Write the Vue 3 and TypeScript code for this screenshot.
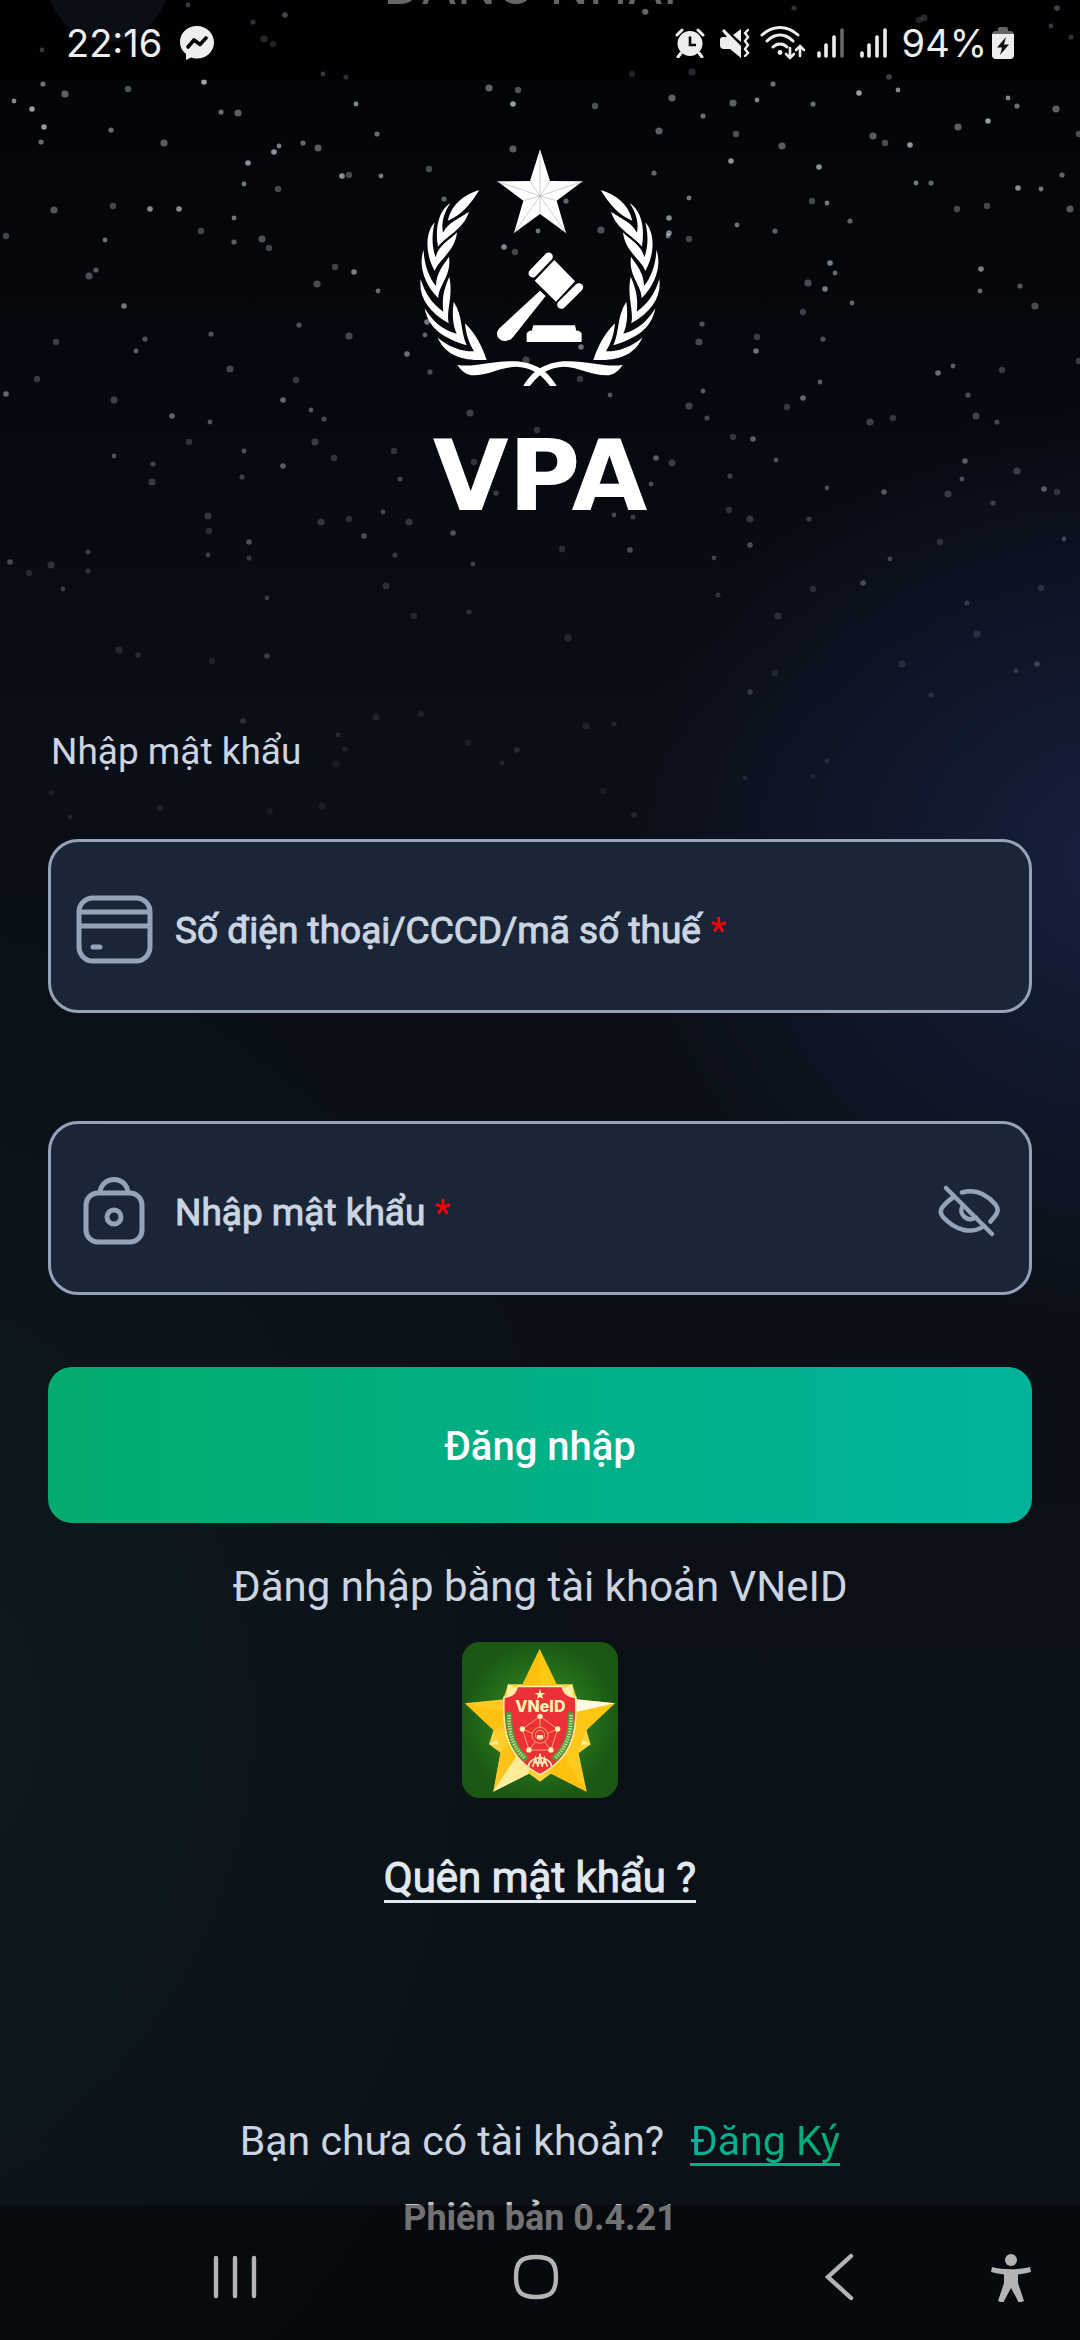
<script setup lang="ts">
import { ref } from 'vue'

interface Star {
  x: number
  y: number
  r: number
  o: number
}

const account = ref('')
const password = ref('')
const hidden = ref(true)

// Star field: x,y pairs on a 1080-wide sky that fades out towards the form.
const sky =
  '32,109 14,101 41,142 54,210 6,236 44,127 42,50 43,84 65,94 128,89 204,82 188,5 253,22 264,39 273,44 285,15 323,74 346,77 489,88 518,90 513,104 356,104 ' +
  '111,130 164,143 113,206 150,209 105,240 96,270 89,276 56,342 124,306 136,351 145,339 114,400 37,379 6,394 114,456 153,464 152,482 189,442 172,416 210,422 ' +
  '211,334 230,369 201,231 179,209 234,218 234,242 262,239 269,248 248,163 244,184 221,112 238,113 278,189 274,152 279,146 303,143 318,148 349,175 342,176 381,176 ' +
  '377,134 317,284 335,267 354,272 378,291 299,325 349,336 296,380 283,400 311,410 324,419 315,442 334,458 283,466 244,451 242,477 208,516 209,531 249,542 ' +
  '208,555 249,558 321,522 349,519 364,536 383,512 400,479 409,522 394,451 407,354 88,552 88,571 51,565 29,573 10,562 63,589 138,655 119,650 212,661 267,656 ' +
  '267,598 395,555 386,586 414,616 453,533 473,564 469,612 568,638 562,549 630,550 614,515 444,199 513,149 429,169 504,247 538,231 566,201 601,230 515,252 427,322 ' +
  '425,335 430,372 526,360 580,379 581,347 610,395 496,493 470,413 537,430 656,458 651,484 633,517 446,455 474,462 669,218 668,236 ' +
  '794,8 924,18 919,20 1057,8 1051,26 1071,37 692,72 632,74 889,77 898,90 773,84 672,98 595,106 859,93 757,100 703,116 733,103 736,134 731,161 689,198 654,173 ' +
  '659,131 689,239 669,233 737,225 775,231 782,146 812,201 819,167 827,203 813,104 873,136 885,143 910,145 916,183 931,183 958,127 957,209 988,121 1008,98 1017,106 ' +
  '1056,109 1079,134 1018,188 1041,189 1062,175 1070,209 987,206 981,269 980,291 1020,286 1035,306 1079,361 830,263 835,273 850,221 808,283 803,312 825,289 852,303 ' +
  '702,324 699,342 757,337 756,351 703,391 707,418 689,406 733,437 753,439 776,460 730,476 672,463 787,407 803,398 820,382 823,339 870,422 893,418 938,373 953,366 ' +
  '968,395 976,416 1002,370 965,461 962,479 997,422 1017,471 1057,492 1044,489 1064,539 993,503 948,494 940,542 884,492 827,488 809,519 750,519 729,510 750,545 ' +
  '714,558 718,595 778,616 813,589 863,583 890,559 967,603 977,634 1041,588 1037,664 1016,671 931,695 902,664 775,673 750,692 827,761 813,776 376,717 421,714 ' +
  '243,721 338,735 345,749 336,764 468,743 517,750 502,763 614,724 586,726 603,791 634,815 745,778 51,793 322,806 270,811 160,808 70,817'

const stars: Star[] = sky.split(' ').map((pair, i) => {
  const [x, y] = pair.split(',').map(Number)
  const bright = [1, 0.7, 0.5, 0.85, 0.6][(i * 3) % 5]
  return { x, y, r: [2.8, 3.6, 2.4, 3.2, 2.6][(i * 7) % 5], o: Math.max(0.12, 0.76 * (1 - y / 920)) * bright }
})

// Left half of the wreath; the right half is its mirror image.
const leaves = [
  'M238 180C190 195 155 222 143 272C185 255 212 222 238 180Z',
  'M151 220C118 240 104 290 114 350C135 320 190 300 207 245C180 265 145 275 129 308C124 280 130 250 151 220Z',
  'M104 277C75 310 75 370 104 423C115 390 165 365 171 307C150 330 115 345 107 382C95 350 95 315 104 277Z',
  'M71 360C55 400 70 460 115 505C115 465 155 440 147 380C130 405 108 430 108 468C85 440 72 400 71 360Z',
  'M62 447C55 500 85 545 146 580C138 540 160 500 148 440C135 470 124 500 130 545C95 520 75 490 62 447Z',
  'M74 535C85 595 130 625 200 646C180 600 190 560 161 515C156 550 158 585 170 611C125 600 95 570 74 535Z',
  'M113 623C140 680 190 692 260 690C245 645 225 610 195 580C198 615 208 640 222 664C185 665 145 650 113 623Z',
  'M172 704C215 715 280 690 350 694C420 700 450 735 470 768L450 768C430 740 400 712 350 710C300 712 270 735 220 736C200 735 185 725 172 704Z',
]
const halves = ['', 'translate(840 0) scale(-1 1)']
</script>

<template>
  <div class="page">
    <svg class="sky" viewBox="0 0 1080 860" aria-hidden="true">
      <circle v-for="(s, i) in stars" :key="i" :cx="s.x" :cy="s.y" :r="s.r" fill="#dfe6f2" :opacity="s.o" />
    </svg>

    <header class="top">
      <button class="round" type="button" aria-label="Quay lại">
        <svg viewBox="0 0 48 48" width="48" height="48"><path d="M30 8 14 24l16 16" fill="none" stroke="#fff" stroke-width="4" stroke-linecap="round" /></svg>
      </button>
      <h1>ĐĂNG NHẬP</h1>
    </header>

    <main class="content">
      <div class="brand">
        <svg class="emblem" viewBox="60 57 720 714" aria-hidden="true">
          <g fill="#fff">
            <g v-for="t in halves" :key="t" :transform="t">
              <path v-for="d in leaves" :key="d" :d="d" />
            </g>
            <path d="M420 58 450 153 548 154 470 212 498 309 420 252 342 309 370 212 292 154 390 153Z" />
            <path d="M463 390 525 454 468 515 404 452Z" />
            <path d="M420 482 437 498 340 620C326 638 300 637 292 618C289 606 293 600 300 593Z" />
            <path d="M400 586H525L529 602H537L545 610V636H380V610L388 602H395Z" />
          </g>
          <path d="M398 430 446 380M484 524 537 472" stroke="#fff" stroke-width="25" stroke-linecap="round" />
          <path d="M420 198V62M420 198 292 154M420 198 548 154M420 198 342 309M420 198 498 309M420 198V252M420 198 390 153M420 198 450 153M420 198 370 212M420 198 470 212" stroke="#b5b5b5" stroke-width="2" />
        </svg>
        <div class="name">VPA</div>
      </div>

      <form class="form" @submit.prevent>
        <p class="hint">Nhập mật khẩu</p>

        <div class="field">
          <svg class="icon" viewBox="0 0 78 78" aria-hidden="true">
            <g fill="none" stroke="#94a3b8" stroke-width="5">
              <rect x="4" y="8" width="71" height="63" rx="14" />
              <path d="M4 22H75M4 36H75" />
              <path d="M18 57H25" stroke-linecap="round" />
            </g>
          </svg>
          <label for="account">Số điện thoại/CCCD/mã số thuế <b>*</b></label>
          <input id="account" v-model="account" type="text" autocomplete="username" />
        </div>

        <div class="field">
          <svg class="icon" viewBox="0 0 78 78" aria-hidden="true">
            <g fill="none" stroke="#94a3b8" stroke-width="5">
              <rect x="11" y="21" width="56" height="49" rx="12" />
              <path d="M25 21C26 3 52 3 53 21" />
              <circle cx="39" cy="45" r="7" />
            </g>
          </svg>
          <label for="password">Nhập mật khẩu <b>*</b></label>
          <input id="password" v-model="password" :type="hidden ? 'password' : 'text'" autocomplete="current-password" />
          <button class="eye" type="button" aria-label="Hiện mật khẩu" @click="hidden = !hidden">
            <svg viewBox="54 72 68 58" width="68" height="58">
              <g fill="none" stroke="#94a3b8" stroke-width="4.5" stroke-linecap="round">
                <path d="M65 78 111 124" />
                <path d="M81 82.500C97 78 107 86 114 94C117.500 98 117.500 102 114 106L109.500 111.500" />
                <path d="M72 87.500C68 90 65 93 61.500 97C59 100 59 103 62 107C75 121 91 124.500 103 116" />
                <path d="M82 95.500C76 104 87 113 95 107.500" />
                <path d="M85.500 98.500C87 102 89 103.500 92 104.500" stroke-width="3" />
              </g>
            </svg>
          </button>
        </div>

        <button class="submit" type="submit">Đăng nhập</button>
      </form>

      <section class="alt">
        <p class="lead">Đăng nhập bằng tài khoản VNeID</p>
        <button class="vneid" type="button" aria-label="Đăng nhập bằng VNeID">
          <svg viewBox="66 66 468 468">
            <defs>
              <radialGradient id="leaf"><stop offset="0" stop-color="#37962a" /><stop offset="1" stop-color="#1b5814" /></radialGradient>
              <linearGradient id="gold" x1="0" y1="1" x2="1" y2="0"><stop offset="0" stop-color="#fff0a8" /><stop offset=".3" stop-color="#ffcb28" /><stop offset=".8" stop-color="#ffc60c" /><stop offset="1" stop-color="#fff3b8" /></linearGradient>
            </defs>
            <rect x="66" y="66" width="468" height="468" fill="url(#leaf)" />
            <path d="M204 193H397L452 373 300 485 147 373Z" fill="#ffd23c" />
            <path d="M204 193 238 210 200 240ZM397 193 362 210 400 240ZM452 373 400 345 400 375ZM147 373 200 345 200 375Z" fill="#fff0a0" />
            <path d="M299 87 350 192 399 237 525 250 440 330 415 395 440 515 335 462H265L160 515 182 395 160 330 75 250 200 237 248 192Z" fill="url(#gold)" />
            <path d="M299 87V300L248 192ZM75 250 300 300 160 330ZM160 515 300 300 182 395ZM440 515 300 300 335 462Z" fill="#ffbd08" opacity=".7" />
            <path d="M525 250 300 300 399 237Z" fill="#fffbe0" />
            <path d="M160 515 300 300 265 462Z" fill="#fff2b0" opacity=".8" />
            <path d="M232 199H367C370 220 385 230 407 232C413 330 400 412 300 464C200 412 187 330 192 232C215 230 228 220 232 199Z" fill="#ec3037" stroke="#fbe9a8" stroke-width="5" />
            <path d="M300 207 304 219H316L306 226 310 238 300 231 290 238 294 226 284 219H296Z" fill="#fff3b0" />
            <text x="301" y="276" text-anchor="middle">VNeID</text>
            <g fill="none" stroke="#fbd98a" stroke-width="2">
              <path d="M300 289 353 327 333 390H267L247 327ZM300 289V322M247 327 278 340M353 327 322 340M267 390 286 366M333 390 314 366" />
              <circle cx="300" cy="346" r="24" />
              <circle cx="300" cy="345" r="14" />
            </g>
            <g fill="#fff3b0">
              <circle cx="300" cy="289" r="8" /><circle cx="353" cy="327" r="8" /><circle cx="333" cy="390" r="8" /><circle cx="267" cy="390" r="8" /><circle cx="247" cy="327" r="8" />
              <rect x="291" y="345" width="18" height="11" />
            </g>
            <path d="M207 285C206 340 220 385 254 413M393 285C394 340 380 385 346 413" fill="none" stroke="#4f9b3d" stroke-width="19" stroke-linecap="round" />
            <path d="M207 285C206 340 220 385 254 413M393 285C394 340 380 385 346 413" fill="none" stroke="#c7df8e" stroke-width="11" stroke-dasharray="4 4" />
            <path d="M265 440C268 405 332 405 335 440M278 440 286 415 294 440 300 402 306 440 314 415 322 440M284 428H316" fill="none" stroke="#fde9b0" stroke-width="5" />
          </svg>
        </button>
        <a class="forgot" href="#forgot">Quên mật khẩu ?</a>
      </section>

      <p class="join">Bạn chưa có tài khoản? <a href="#register"><span>Đăng Ký</span></a></p>
      <p class="version">Phiên bản 0.4.21</p>
    </main>

    <div class="status">
      <span class="clock">22:16</span>
      <svg class="messenger" viewBox="0 0 34 34" width="34" height="34">
        <path d="M17 0C7 0 0 7 0 16C0 21 2 25 6 28V34L11 31.500C13 32 15 32.500 17 32.500C27 32.500 34 25 34 16.500S27 0 17 0Z" fill="#eee" />
        <path d="M8 21 14 14 20 18.500 26 12" fill="none" stroke="#050505" stroke-width="3.600" stroke-linejoin="round" stroke-linecap="round" />
      </svg>
      <div class="signals">
        <svg viewBox="0 0 30 30" width="30" height="30">
          <path d="M2 7 7 2M28 7 23 2M6 25 3 29M24 25 27 29" stroke="#eee" stroke-width="3" stroke-linecap="round" />
          <circle cx="15" cy="15.500" r="12.500" fill="#eee" />
          <path d="M15 8.500V17H21" fill="none" stroke="#050505" stroke-width="2.600" />
        </svg>
        <svg viewBox="0 0 30 30" width="30" height="30">
          <path d="M21 30 10 21H4Q0 21 0 17V12Q0 9 3 9H7L2 3 4 1 21 18ZM21 1V14L13 7Z" fill="#eee" />
          <path d="M28 2 25 5 28 9 25 13 28 17 25 21 28 25 25 28" fill="none" stroke="#eee" stroke-width="2.400" stroke-linecap="round" />
        </svg>
        <svg class="tight" viewBox="0 0 46 34" width="46" height="34">
          <g fill="none" stroke="#eee" stroke-width="3" stroke-linecap="round">
            <path d="M2 9C13-1 27-1 38 9M7 15C15 7 25 7 33 15M13 21C17 17 23 17 27 21" />
            <path d="M30 22V32M26 28 30 32 34 28M40 30V20M36 24 40 20 44 24" stroke-width="2.600" />
          </g>
          <circle cx="20" cy="26.500" r="2.400" fill="#eee" />
        </svg>
        <svg class="tight" viewBox="0 0 28 32" width="28" height="32">
          <path d="M3 26V29M10 18V29M18 10V29" stroke="#eee" stroke-width="3.600" stroke-linecap="round" />
          <path d="M26 3V29" stroke="#666" stroke-width="3.600" stroke-linecap="round" />
        </svg>
        <svg viewBox="0 0 28 32" width="28" height="32">
          <path d="M3 26V29M10 18V29M18 10V29M26 3V29" stroke="#eee" stroke-width="3.600" stroke-linecap="round" />
        </svg>
        <span class="level">94%</span>
        <svg viewBox="0 0 22 32" width="22" height="32">
          <path d="M0 8Q0 4 4 4H6V2Q6 0 8 0H14Q16 0 16 2V4H18Q22 4 22 8Z" fill="#666" />
          <path d="M0 7H22V28Q22 32 18 32H4Q0 32 0 28Z" fill="#eee" />
          <path d="M14 10 5 20.500H10L8 28 17 17.500H12Z" fill="#111" />
        </svg>
      </div>
    </div>

    <nav class="keys">
      <button type="button" aria-label="Gần đây">
        <svg viewBox="0 0 50 50" width="50" height="50"><path d="M6 6V44M25 6V44M44 6V44" stroke="#b4b4b4" stroke-width="4.400" stroke-linecap="round" /></svg>
      </button>
      <button type="button" aria-label="Màn hình chính">
        <svg viewBox="0 0 50 50" width="50" height="50"><path d="M25 5C40 5 45 10 45 25S40 45 25 45 5 40 5 25 10 5 25 5Z" fill="none" stroke="#b4b4b4" stroke-width="4.400" /></svg>
      </button>
      <button type="button" aria-label="Trở lại">
        <svg viewBox="0 0 50 50" width="50" height="50"><path d="M38 4 15 25 38 46" fill="none" stroke="#b4b4b4" stroke-width="4.400" stroke-linecap="round" /></svg>
      </button>
      <button type="button" aria-label="Hỗ trợ tiếp cận">
        <svg viewBox="0 -2 44 50" width="44" height="50">
          <g fill="#b4b4b4">
            <circle cx="22" cy="6" r="6" />
            <path d="M3 13C14 16 30 16 41 13L42 18C38 19 33 20 29 20.500V29L35 47 30 49 22 34 14 49 9 47 15 29V20.500C11 20 6 19 2 18Z" />
          </g>
        </svg>
      </button>
    </nav>
  </div>
</template>

<style>
body {
  margin: 0;
  background: #0a0f16;
}
</style>

<style scoped>
.page {
  position: relative;
  min-height: 100vh;
  overflow: hidden;
  box-sizing: border-box;
  font-family: Roboto, "Liberation Sans", sans-serif;
  color: #cbd5e1;
  background:
    radial-gradient(500px 460px at 104% 860px, rgba(28, 40, 80, 0.7), rgba(28, 40, 80, 0) 100%),
    radial-gradient(700px 900px at -10% 1700px, rgba(12, 34, 34, 0.55), rgba(12, 34, 34, 0) 100%),
    linear-gradient(180deg, #020306 0, #05070d 300px, #0a0e16 760px, #0b1017 1500px, #0b1118 100%);
}
.page * {
  box-sizing: border-box;
}
button {
  padding: 0;
  border: 0;
  background: none;
  font: inherit;
  color: inherit;
}
svg {
  display: block;
}
p,
h1 {
  margin: 0;
}
.sky {
  position: absolute;
  top: 0;
  left: 0;
  width: 100%;
}
.top {
  position: relative;
  display: grid;
  grid-template-columns: 120px 1fr 120px;
  align-items: center;
  height: 120px;
  margin-top: -78px;
  padding: 0 48px;
  color: #fff;
}
.round {
  display: grid;
  place-items: center;
  width: 120px;
  height: 120px;
  border-radius: 50%;
  background: #1a2638;
}
h1 {
  padding-top: 8px;
  font: 400 52px/60px Inter, sans-serif;
  text-align: center;
}
.content {
  position: relative;
  display: flex;
  flex-direction: column;
  padding: 107px 48px 0;
}
.brand {
  display: flex;
  flex-direction: column;
  align-items: center;
}
.emblem {
  width: 240px;
  height: 238px;
}
.name {
  margin-top: 40px;
  color: #fff;
  font: 700 98px/98px "DejaVu Sans", sans-serif;
}
.form {
  display: flex;
  flex-direction: column;
  margin-top: 202px;
}
.hint {
  padding-left: 3px;
  font-size: 37px;
  line-height: 50px;
}
.field {
  display: flex;
  align-items: center;
  height: 174px;
  margin-top: 62px;
  padding: 6px 26px 0 24px;
  border: 3px solid #94a3b8;
  border-radius: 30px;
  background: #1a2638;
}
.field + .field {
  margin-top: 108px;
}
.icon {
  width: 78px;
  height: 78px;
  margin-right: 22px;
}
.field label {
  padding-top: 4px;
  font-size: 37px;
  line-height: 50px;
  white-space: nowrap;
  -webkit-text-stroke: 1px #cbd5e1;
}
.field b {
  color: #f00;
  font-weight: 400;
  -webkit-text-stroke: 0;
}
.field input {
  flex: 1;
  min-width: 0;
  height: 100%;
  border: 0;
  outline: 0;
  background: none;
  color: #cbd5e1;
  font: inherit;
  font-size: 37px;
}
.submit {
  height: 156px;
  margin-top: 72px;
  padding-top: 4px;
  border-radius: 24px;
  background: linear-gradient(90deg, #03ab6e, #00b49c);
  color: #fff;
  font: 500 40px/48px Roboto, sans-serif;
}
.alt {
  display: flex;
  flex-direction: column;
  align-items: center;
}
.lead {
  margin-top: 36px;
  font-size: 42px;
  line-height: 56px;
}
.vneid {
  width: 156px;
  height: 156px;
  margin-top: 27px;
  border-radius: 18px;
  overflow: hidden;
}
.vneid text {
  font: 800 48px Inter, sans-serif;
  fill: #fff3b0;
}
.forgot {
  margin-top: 58px;
  border-bottom: 3px solid #e2e8f0;
  color: #e2e8f0;
  font-size: 42px;
  line-height: 44px;
  text-decoration: none;
  -webkit-text-stroke: 1px #e2e8f0;
}
.join {
  display: flex;
  justify-content: center;
  gap: 26px;
  margin-top: 216px;
  font-size: 41px;
  line-height: 44px;
}
.join a {
  border-bottom: 3px solid #02b086;
  text-decoration: none;
}
.join span {
  background: linear-gradient(90deg, #00b49c, #03ab6e);
  background-clip: text;
  color: transparent;
}
.version {
  margin-top: 30px;
  color: #c4c4c4;
  font: 700 36px/44px Roboto, sans-serif;
  text-align: center;
}
.status {
  position: absolute;
  top: 0;
  left: 0;
  right: 0;
  display: flex;
  align-items: center;
  height: 80px;
  padding: 6px 66px 0;
  background: rgba(0, 0, 0, 0.6);
  color: #eee;
  font: 400 38px/48px Inter, sans-serif;
}
.messenger {
  margin-left: 18px;
}
.signals {
  display: flex;
  align-items: center;
  gap: 15px;
  margin-left: auto;
}
.tight {
  margin-left: -5px;
}
.level {
  margin-right: -10px;
}
.keys {
  position: absolute;
  bottom: 0;
  left: 0;
  right: 0;
  display: grid;
  grid-template-columns: 1fr 1fr 1fr 44px;
  height: 135px;
  padding: 8px 47px 0 84px;
  background: rgba(0, 0, 0, 0.42);
}
.keys button {
  display: grid;
  place-items: center;
}
</style>
